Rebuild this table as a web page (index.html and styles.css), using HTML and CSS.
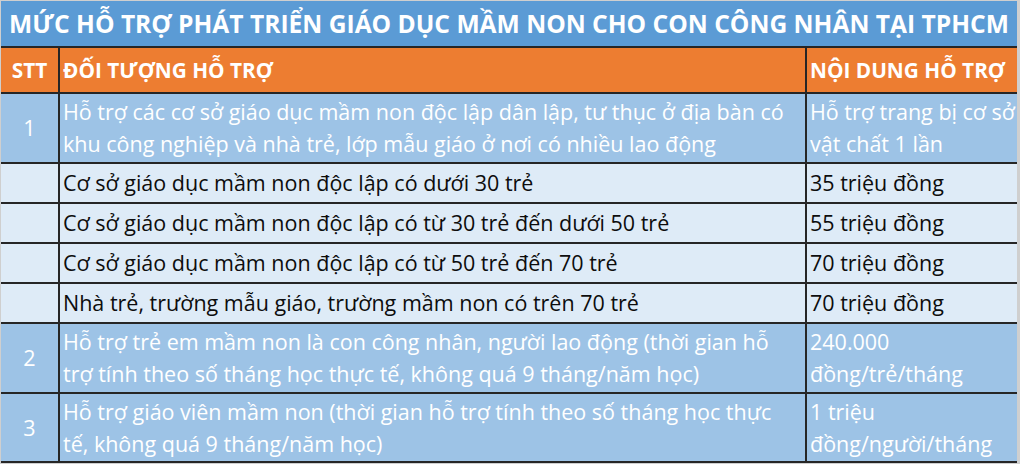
FILE: index.html
```html
<!DOCTYPE html>
<html lang="vi">
<head>
<meta charset="utf-8">
<title>Mức hỗ trợ</title>
<link rel="stylesheet" href="styles.css">
</head>
<body>
<div class="sheet">
  <div class="title">MỨC HỖ TRỢ PHÁT TRIỂN GIÁO DỤC MẦM NON CHO CON CÔNG NHÂN TẠI TPHCM</div>

  <div class="cell head center">STT</div>
  <div class="cell head">ĐỐI TƯỢNG HỖ TRỢ</div>
  <div class="cell head">NỘI DUNG HỖ TRỢ</div>

  <div class="cell dark center">1</div>
  <div class="cell dark">Hỗ trợ các cơ sở giáo dục mầm non độc lập dân lập, tư thục ở địa bàn có<br>khu công nghiệp và nhà trẻ, lớp mẫu giáo ở nơi có nhiều lao động</div>
  <div class="cell dark">Hỗ trợ trang bị cơ sở<br>vật chất 1 lần</div>

  <div class="cell light"></div>
  <div class="cell light">Cơ sở giáo dục mầm non độc lập có dưới 30 trẻ</div>
  <div class="cell light">35 triệu đồng</div>

  <div class="cell light"></div>
  <div class="cell light">Cơ sở giáo dục mầm non độc lập có từ 30 trẻ đến dưới 50 trẻ</div>
  <div class="cell light">55 triệu đồng</div>

  <div class="cell light"></div>
  <div class="cell light">Cơ sở giáo dục mầm non độc lập có từ 50 trẻ đến 70 trẻ</div>
  <div class="cell light">70 triệu đồng</div>

  <div class="cell light"></div>
  <div class="cell light">Nhà trẻ, trường mẫu giáo, trường mầm non có trên 70 trẻ</div>
  <div class="cell light">70 triệu đồng</div>

  <div class="cell dark center">2</div>
  <div class="cell dark">Hỗ trợ trẻ em mầm non là con công nhân, người lao động (thời gian hỗ<br>trợ tính theo số tháng học thực tế, không quá 9 tháng/năm học)</div>
  <div class="cell dark">240.000<br>đồng/trẻ/tháng</div>

  <div class="cell dark center">3</div>
  <div class="cell dark">Hỗ trợ giáo viên mầm non (thời gian hỗ trợ tính theo số tháng học thực<br>tế, không quá 9 tháng/năm học)</div>
  <div class="cell dark">1 triệu<br>đồng/người/tháng</div>
</div>
</body>
</html>
```

FILE: styles.css
```css
html, body {
  margin: 0;
  padding: 0;
  background: #cfcfcf;
}

body {
  padding: 1px 3px 0 1px;
  font-family: "Open Sans", Lato, sans-serif;
}

.sheet {
  width: 1016px;
  display: grid;
  grid-template-columns: 57px 745px 1fr;
  grid-template-rows: 45px 44px 68px 38px 38px 38px 38px 68px 67px;
  gap: 2px;
  padding-bottom: 2px;
  background: #262626;
}

.title {
  grid-column: 1 / 4;
  background: #5b9bd5;
  color: #fff;
  font-weight: 700;
  font-size: 24.6px;
  display: flex;
  align-items: center;
  justify-content: center;
  white-space: nowrap;
}

.cell {
  display: flex;
  align-items: center;
  padding-left: 3px;
  font-size: 21.5px;
  line-height: 32px;
  white-space: nowrap;
}

.center {
  justify-content: center;
  padding-left: 0;
}

.head {
  background: #ed7d31;
  color: #fff;
  font-weight: 700;
  font-size: 20.8px;
}

.dark {
  background: #9dc3e6;
  color: #fff;
}

.light {
  background: #deebf7;
  color: #0d0d0d;
}
```
